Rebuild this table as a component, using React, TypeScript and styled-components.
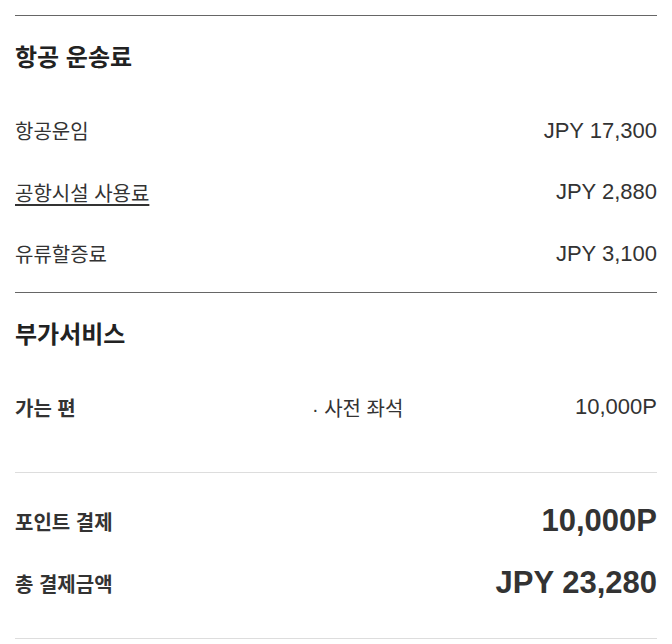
import styled, { createGlobalStyle } from "styled-components"

const Global = createGlobalStyle`
body {
  margin: 0;
  background: #fff;
  font-family: "Liberation Sans", "Noto Sans CJK KR", sans-serif;
  color: #333;
}
`

const fares = [
  { label: "항공운임", value: "JPY 17,300" },
  { label: "공항시설 사용료", value: "JPY 2,880", link: true },
  { label: "유류할증료", value: "JPY 3,100" },
]

const App = () => {
  return (
    <Page>
      <Global />
      <Section $pb={7}>
        <Title>항공 운송료</Title>
        <List>
          {fares.map((f) => (
            <Row key={f.label}>
              <Label $link={f.link}>{f.label}</Label>
              <Value>{f.value}</Value>
            </Row>
          ))}
        </List>
      </Section>
      <Section $pb={34}>
        <Title>부가서비스</Title>
        <List>
          <ServiceRow>
            <Label $bold>가는 편</Label>
            <Middle>· 사전 좌석</Middle>
            <Value>10,000P</Value>
          </ServiceRow>
        </List>
      </Section>
      <Total>
        <TotalRow>
          <Label $bold>포인트 결제</Label>
          <BigValue>10,000P</BigValue>
        </TotalRow>
        <TotalRow>
          <Label $bold>총 결제금액</Label>
          <BigValue>JPY 23,280</BigValue>
        </TotalRow>
      </Total>
    </Page>
  )
}

export default App

const Page = styled.div`
padding: 15px 15px 0;
width: 642px;
`
const Section = styled.div<{ $pb?: number }>`
border-top: 1px solid #666;
padding: 27px 0 ${(p) => p.$pb ?? 8}px;
`
const Title = styled.div`
font-size: 24px;
font-weight: 700;
line-height: 30px;
color: #222;
`
const List = styled.div`
margin-top: 27px;
`
const Row = styled.div`
display: flex;
justify-content: space-between;
align-items: center;
height: 61.5px;
`
const ServiceRow = styled.div`
display: grid;
grid-template-columns: 297px 1fr auto;
align-items: center;
height: 61.5px;
`
const TotalRow = styled(Row)`
height: 62px;
`
const Label = styled.div<{ $bold?: boolean; $link?: boolean }>`
font-size: 20px;
font-weight: ${(p) => (p.$bold ? 700 : 400)};
text-decoration: ${(p) => (p.$link ? "underline" : "none")};
text-underline-offset: 3px;
color: #333;
`
const Middle = styled.div`
font-size: 20px;
color: #333;
`
const Value = styled.div`
font-size: 22px;
color: #333;
`
const Total = styled.div`
border-top: 1px solid #ddd;
border-bottom: 1px solid #ddd;
padding: 17px 0 24px;
`
const BigValue = styled.div`
font-size: 31px;
font-weight: 700;
color: #333;
`
